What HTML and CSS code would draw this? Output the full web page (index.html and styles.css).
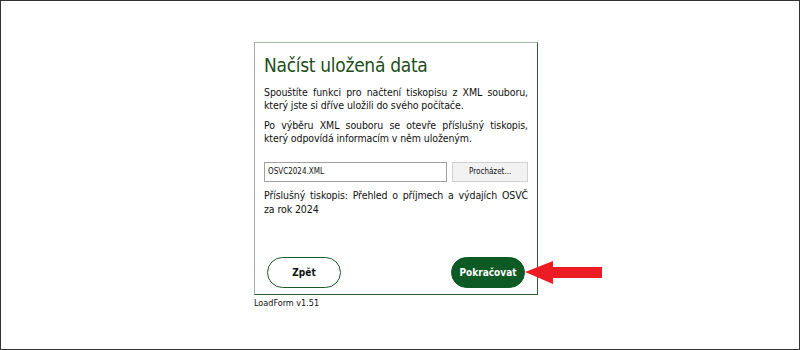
FILE: index.html
```html
<!DOCTYPE html>
<html lang="cs">
<head>
<meta charset="utf-8">
<link rel="stylesheet" href="styles.css">
</head>
<body>
<div class="frame">
  <div class="wrap">
    <div class="card">
      <h1 class="title">Načíst uložená data</h1>
      <p class="para">Spouštíte funkci pro načtení tiskopisu z XML souboru, který jste si dříve uložili do svého počítače.</p>
      <p class="para">Po výběru XML souboru se otevře příslušný tiskopis, který odpovídá informacím v něm uloženým.</p>
      <div class="filerow">
        <div class="input">OSVC2024.XML</div>
        <div class="browse">Procházet...</div>
      </div>
      <p class="para info">Příslušný tiskopis: Přehled o příjmech a výdajích OSVČ za rok 2024</p>
      <div class="spacer"></div>
      <div class="actions">
        <div class="btn back">Zpět</div>
        <div class="btn next">Pokračovat
          <svg class="arrow" width="78" height="30" viewBox="0 0 78 30">
            <polygon points="0,14 28,3 28,9 77,9 77,20 28,20 28,26" fill="#ed1c24"/>
          </svg>
        </div>
      </div>
    </div>
    <div class="version">LoadForm v1.51</div>
  </div>
</div>
</body>
</html>
```

FILE: styles.css
```css
html, body {
  margin: 0;
  padding: 0;
  background: #fff;
}
.frame {
  width: 800px;
  height: 350px;
  box-sizing: border-box;
  border: 1px solid #333;
  padding: 41px 0 0 253px;
  font-family: "DejaVu Sans Condensed", "DejaVu Sans", sans-serif;
  color: #111;
}
.wrap {
  width: 284px;
}
.card {
  box-sizing: border-box;
  width: 284px;
  height: 253px;
  border: 1px solid #2f5a35;
  border-top-color: #a9bca9;
  border-left-color: #a8aca8;
  padding: 9px 9px 6px 9px;
  display: flex;
  flex-direction: column;
}
.title {
  margin: 0 0 8px 0;
  font-weight: normal;
  font-size: 19px;
  letter-spacing: -0.3px;
  line-height: 26px;
  color: #1d4d19;
}
.para {
  margin: 0 0 7px 0;
  font-size: 10.5px;
  letter-spacing: -0.1px;
  line-height: 13px;
  text-align: justify;
}
.filerow {
  display: flex;
  gap: 5px;
  margin-top: 10px;
  margin-bottom: 6px;
}
.input {
  box-sizing: border-box;
  width: 184px;
  height: 20px;
  border: 1px solid #a0a0a0;
  font-size: 8px;
  line-height: 18px;
  padding-left: 3px;
}
.browse {
  box-sizing: border-box;
  width: 76px;
  height: 20px;
  border: 1px solid #d0d0d0;
  background: #f2f2f2;
  font-size: 8px;
  line-height: 18px;
  text-align: center;
}
.info {
  line-height: 14px;
}
.spacer {
  flex: 1;
}
.actions {
  display: flex;
  justify-content: space-between;
  padding: 0 3px 0 3px;
}
.btn {
  box-sizing: border-box;
  width: 74px;
  height: 31px;
  border-radius: 16px;
  font-weight: bold;
  font-size: 10px;
  line-height: 29px;
  text-align: center;
  position: relative;
}
.back {
  border: 1.5px solid #1d5c29;
  color: #111;
  background: #fff;
}
.next {
  border: 1px solid #0d5a25;
  background: #0d5a25;
  color: #fff;
}
.arrow {
  position: absolute;
  left: 73px;
  top: 0;
}
.version {
  margin-top: 2px;
  font-size: 9px;
  line-height: 12px;
  color: #111;
}
```
